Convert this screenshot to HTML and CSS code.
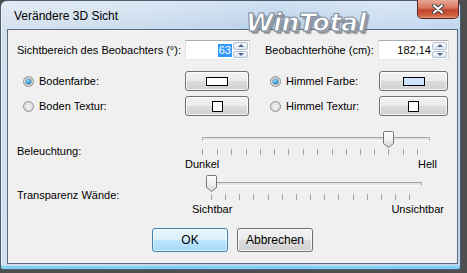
FILE: index.html
```html
<!DOCTYPE html>
<html lang="de">
  <head>
    <meta charset="UTF-8" />
    <title>Verändere 3D Sicht</title>
    <link rel="stylesheet" href="styles.css">
  </head>
  <body>
    <div class="window">
      <div class="titlebar">
        <span class="title">Verändere 3D Sicht</span>
        <button class="close">
          <svg width="14" height="10" viewBox="0 0 14 10">
            <path d="M3 1.5 L11 8.5 M11 1.5 L3 8.5" stroke="#3a3a3a" stroke-width="4" stroke-linecap="round"/>
            <path d="M3 1.5 L11 8.5 M11 1.5 L3 8.5" stroke="#fff" stroke-width="2.2" stroke-linecap="round"/>
          </svg>
        </button>
      </div>
      <div class="logo">WinTotal</div>

      <div class="client">
        <div class="fields">
          <label class="lbl first">Sichtbereich des Beobachters (°):</label>
          <div class="spin first">
            <span class="val"><span class="sel">63</span></span>
            <span class="arrows"><i class="up"></i><i class="down"></i></span>
          </div>
          <label class="lbl right first">Beobachterhöhe (cm):</label>
          <div class="spin wide first">
            <span class="val">182,14</span>
            <span class="arrows"><i class="up"></i><i class="down"></i></span>
          </div>

          <label class="opt"><span class="radio checked"></span>Bodenfarbe:</label>
          <button class="btn pick"><span class="swatch"></span></button>
          <label class="opt right"><span class="radio checked"></span>Himmel Farbe:</label>
          <button class="btn pick wide"><span class="swatch sky"></span></button>

          <label class="opt"><span class="radio"></span>Boden Textur:</label>
          <button class="btn pick"><span class="square"></span></button>
          <label class="opt right"><span class="radio"></span>Himmel Textur:</label>
          <button class="btn pick wide"><span class="square"></span></button>
        </div>

        <div class="slider-row light">
          <span class="slider-label">Beleuchtung:</span>
          <div class="slider">
            <svg width="260" height="28" viewBox="0 0 260 28">
              <path d="M17 8.5 H244" stroke="#a3a3a3"/>
              <path d="M18 9.5 H244 M18 10.5 H244" stroke="#e4e4e4"/>
              <path d="M17 11.5 H245" stroke="#fcfcfc"/>
              <path d="M17.5 8 V12 M244.5 8 V12" stroke="#b5b5b5"/>
              <path d="M17.5 20v6 M32.5 20v6 M46.5 20v6 M61.5 20v6 M75.5 20v6 M89.5 20v6 M103.5 20v6 M118.5 20v6 M132.5 20v6 M147.5 20v6 M161.5 20v6 M175.5 20v6 M189.5 20v6 M203.5 20v6 M218.5 20v6 M232.5 20v6" stroke="#a6a6a6"/>
              <defs>
                <linearGradient id="thumb" x1="0" y1="0" x2="0" y2="1">
                  <stop offset="0" stop-color="#ffffff"/>
                  <stop offset="0.5" stop-color="#f0f0f0"/>
                  <stop offset="1" stop-color="#d6d6d6"/>
                </linearGradient>
              </defs>
              <path d="M199.5 2.5 H207.5 Q208.5 2.5 208.5 3.5 V14.5 L203.5 18.5 L198.5 14.5 V3.5 Q198.5 2.5 199.5 2.5 Z" fill="url(#thumb)" stroke="#767676"/>
            </svg>
            <div class="scale"><span>Dunkel</span><span>Hell</span></div>
          </div>
        </div>

        <div class="slider-row glass">
          <span class="slider-label">Transparenz Wände:</span>
          <div class="slider">
            <svg width="260" height="30" viewBox="0 0 260 30">
              <path d="M22 10.5 H236" stroke="#a3a3a3"/>
              <path d="M23 11.5 H236 M23 12.5 H236" stroke="#e4e4e4"/>
              <path d="M22 13.5 H237" stroke="#fcfcfc"/>
              <path d="M22.5 10 V14 M236.5 10 V14" stroke="#b5b5b5"/>
              <path d="M26.5 22v6 M40.5 22v6 M54.5 22v6 M68.5 22v6 M83.5 22v6 M97.5 22v6 M111.5 22v6 M125.5 22v6 M139.5 22v6 M153.5 22v6 M168.5 22v6 M182.5 22v6 M196.5 22v6 M210.5 22v6 M224.5 22v6" stroke="#a6a6a6"/>
              <path d="M22.5 3.5 H30.5 Q31.5 3.5 31.5 4.5 V15.5 L26.5 19.5 L21.5 15.5 V4.5 Q21.5 3.5 22.5 3.5 Z" fill="url(#thumb)" stroke="#767676"/>
            </svg>
            <div class="scale"><span>Sichtbar</span><span>Unsichtbar</span></div>
          </div>
        </div>

        <div class="actions">
          <button class="btn default">OK</button>
          <button class="btn">Abbrechen</button>
        </div>
      </div>
    </div>
  </body>
</html>
```

FILE: styles.css
```css
* {
  box-sizing: border-box;
}
body {
  margin: 0;
  width: 467px;
  height: 273px;
  overflow: hidden;
  background-color: #4e4e4e;
  font-family: "Liberation Sans", Arial, sans-serif;
  font-size: 11px;
  line-height: 14px;
  color: #000;
}
.window {
  position: relative;
  width: 461px;
  height: 270px;
  padding: 0 2px 5px 6px;
  border: 1px solid #4a5d72;
  border-radius: 7px 7px 3px 3px;
  background:
    linear-gradient(180deg, rgba(255, 255, 255, 0.35), rgba(255, 255, 255, 0) 30px),
    linear-gradient(100deg, #d5e1ed 0%, #c9dbee 30%, #b7d0ea 55%, #c6daef 75%, #bdd5ec 100%);
  box-shadow: inset 0 -3px 0 #7fd0f2, inset 1px 0 0 rgba(255, 255, 255, 0.6);
}
.titlebar {
  display: flex;
  height: 28px;
}
.title {
  padding: 7px 0 0 7px;
  font-size: 12px;
  line-height: 16px;
  white-space: nowrap;
}
.close {
  margin: -1px -1px 0 auto;
  width: 42px;
  height: 19px;
  padding: 0;
  border: 1px solid #5e2a22;
  border-top: none;
  border-radius: 0 0 5px 5px;
  background: linear-gradient(180deg, #e9a896 0%, #d8735f 45%, #c2432d 55%, #d0603f 85%, #e0907a 100%);
  display: flex;
  align-items: center;
  justify-content: center;
}
.logo {
  position: absolute;
  left: 245px;
  top: 7px;
  font-family: "DejaVu Sans", sans-serif;
  font-weight: bold;
  font-style: italic;
  font-size: 25px;
  line-height: 30px;
  letter-spacing: -0.3px;
  color: #fff;
  -webkit-text-stroke: 1px #7d8b9b;
  text-shadow: 1px 1px 0 #a5adb6, 2px 2px 0 #8a939d, 3px 3px 1px rgba(70, 80, 90, 0.5);
}
.client {
  height: 235px;
  padding: 10px 0 0 9px;
  border: 1px solid #5c6c80;
  background-color: #f0f0f0;
}
.fields {
  display: grid;
  grid-template-columns: 168px 65px 128px 71px;
  row-gap: 5px;
  align-items: center;
  white-space: nowrap;
}
.fields .first {
  margin-bottom: 6px;
}
.lbl.right {
  padding-left: 15px;
}
.opt {
  display: flex;
  align-items: center;
  gap: 5px;
  padding-left: 6px;
}
.opt.right {
  padding-left: 20px;
}
.radio {
  width: 11px;
  height: 11px;
  border: 1px solid #8f8f8f;
  border-radius: 50%;
  background: radial-gradient(circle at 50% 50%, #f4f4f4 0, #dcdcdc 70%, #cfcfcf 100%);
  display: flex;
  align-items: center;
  justify-content: center;
}
.radio.checked::after {
  content: "";
  width: 5px;
  height: 5px;
  border-radius: 50%;
  background: radial-gradient(circle at 40% 35%, #a6e3ff 0, #2a8fd6 55%, #0d4f86 100%);
  box-shadow: 0 0 0 1px rgba(30, 90, 140, 0.35);
}
.spin {
  display: flex;
  height: 20px;
  padding: 1px 1px 1px 0;
  border: 1px solid #abadb3;
  border-color: #abadb3 #dbdfe6 #e3e9ef #e2e3ea;
  background-color: #fff;
}
.spin.wide {
  width: 71px;
}
.val {
  flex: 1;
  display: flex;
  justify-content: flex-end;
  align-items: center;
  padding-right: 1px;
}
.sel {
  padding: 0 1px;
  background-color: #3399ff;
  color: #fff;
  line-height: 13px;
}
.arrows {
  width: 15px;
  display: flex;
  flex-direction: column;
  gap: 1px;
}
.arrows i {
  flex: 1;
  border: 1px solid #b4c0cf;
  border-radius: 2px;
  background: linear-gradient(180deg, #f6f8fb, #dfe7f0);
  display: flex;
  align-items: center;
  justify-content: center;
}
.arrows i::after {
  content: "";
  border-left: 3px solid transparent;
  border-right: 3px solid transparent;
}
.arrows .up::after {
  border-bottom: 3px solid #4d6890;
}
.arrows .down::after {
  border-top: 3px solid #4d6890;
}
.btn {
  height: 20px;
  padding: 0;
  border: 1px solid #707070;
  border-radius: 3px;
  background: linear-gradient(180deg, #f2f2f2 0%, #ebebeb 50%, #dddddd 51%, #cfcfcf 100%);
  box-shadow: inset 0 0 0 1px rgba(255, 255, 255, 0.75);
  font: inherit;
  color: #000;
  display: flex;
  align-items: center;
  justify-content: center;
}
.pick {
  width: 64px;
}
.pick.wide {
  width: 69px;
  margin-left: 1px;
}
.swatch {
  width: 22px;
  height: 9px;
  border: 1px solid #000;
  background-color: #fff;
}
.swatch.sky {
  background-color: #cde2fb;
}
.square {
  width: 11px;
  height: 11px;
  border: 1px solid #000;
  background-color: #fff;
}
.slider-row {
  display: flex;
}
.slider-row.light {
  margin-top: 13px;
}
.slider-row.glass {
  margin-top: 1px;
}
.slider-label {
  width: 168px;
  padding-top: 15px;
}
.glass .slider-label {
  padding-top: 16px;
}
.slider {
  width: 260px;
}
.slider svg {
  display: block;
}
.scale {
  display: flex;
  justify-content: space-between;
  padding-right: 8px;
}
.glass .scale {
  padding: 0 1px 0 7px;
}
.actions {
  display: flex;
  justify-content: center;
  gap: 9px;
  margin-top: 12px;
  padding-right: 9px;
}
.actions .btn {
  width: 76px;
  height: 24px;
  font-size: 12px;
}
.actions .btn.default {
  border-color: #3c7fb1;
  background: linear-gradient(180deg, #eaf6fd 0%, #d9f0fc 50%, #bee6fd 51%, #a7d9f5 100%);
  box-shadow: inset 0 0 0 1px rgba(255, 255, 255, 0.6);
}
```
